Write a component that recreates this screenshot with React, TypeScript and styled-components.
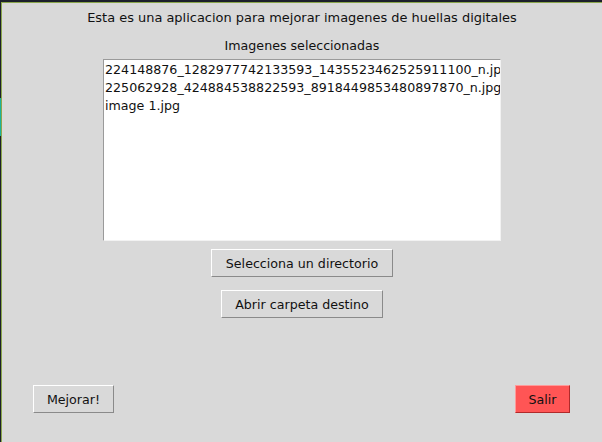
import React from 'react';
import styled, { createGlobalStyle } from 'styled-components';

const GlobalStyle = createGlobalStyle`
  html, body {
    margin: 0;
    padding: 0;
    background: #1c1f2b;
    overflow: hidden;
  }
  body {
    font-family: "DejaVu Sans", "Liberation Sans", sans-serif;
  }
`;

const Desktop = styled.div`
  display: flex;
  width: 602px;
  height: 442px;
  padding-top: 2px;
  box-sizing: border-box;
`;

const LeftEdge = styled.div`
  width: 1px;
  display: flex;
  flex-direction: column;
  padding-top: 96px;

  span {
    display: block;
    height: 38px;
    background: #1bb39a;
  }
`;

const Window = styled.div`
  flex: 1;
  display: flex;
  flex-direction: column;
  background: #d9d9d9;
  border-top: 1px solid #8aa64c;
  border-left: 1px solid #8aa64c;
  color: #111;
  font-size: 12.65px;
`;

const Main = styled.div`
  flex: 1;
  display: flex;
  flex-direction: column;
  align-items: center;
  padding-top: 6px;
`;

const Caption = styled.div<{ $gap: number; $size?: number }>`
  line-height: 17px;
  font-size: ${p => p.$size ?? 12.65}px;
  margin-bottom: ${p => p.$gap}px;
  white-space: nowrap;
`;

const ListBox = styled.div`
  width: 398px;
  height: 182px;
  box-sizing: border-box;
  background: #fff;
  border-top: 1px solid #9a9a9a;
  border-left: 1px solid #9a9a9a;
  border-right: 1px solid #f2f2f2;
  border-bottom: 1px solid #f2f2f2;
  padding: 1px 0 0 1px;
  overflow: hidden;
  margin-bottom: 8px;
`;

const ListItem = styled.div`
  line-height: 18px;
  white-space: nowrap;
`;

const Button = styled.button<{ $danger?: boolean; $width: number }>`
  width: ${p => p.$width}px;
  height: 28px;
  box-sizing: border-box;
  font-family: inherit;
  font-size: 12.65px;
  color: #111;
  padding: 0;
  background: ${p => (p.$danger ? '#ff5555' : '#d9d9d9')};
  border: 1px solid;
  border-color: ${p =>
    p.$danger
      ? '#ff9a9a #b02a2a #b02a2a #ff9a9a'
      : '#ffffff #8a8a8a #8a8a8a #ffffff'};
  cursor: pointer;
`;

const Stack = styled.div`
  display: flex;
  flex-direction: column;
  align-items: center;
  gap: 13px;
`;

const Footer = styled.div`
  display: flex;
  justify-content: space-between;
  padding: 0 32px 29px 31px;
`;

const files = [
  '224148876_1282977742133593_1435523462525911100_n.jpg',
  '225062928_424884538822593_8918449853480897870_n.jpg',
  'image 1.jpg',
];

export default function App() {
  return (
    <>
      <GlobalStyle />
      <Desktop>
        <LeftEdge>
          <span />
        </LeftEdge>
        <Window>
          <Main>
            <Caption $gap={11} $size={12.95}>
              Esta es una aplicacion para mejorar imagenes de huellas digitales
            </Caption>
            <Caption $gap={5}>Imagenes seleccionadas</Caption>
            <ListBox>
              {files.map(f => (
                <ListItem key={f}>{f}</ListItem>
              ))}
            </ListBox>
            <Stack>
              <Button $width={182}>Selecciona un directorio</Button>
              <Button $width={162}>Abrir carpeta destino</Button>
            </Stack>
          </Main>
          <Footer>
            <Button $width={81}>Mejorar!</Button>
            <Button $width={55} $danger>
              Salir
            </Button>
          </Footer>
        </Window>
      </Desktop>
    </>
  );
}
